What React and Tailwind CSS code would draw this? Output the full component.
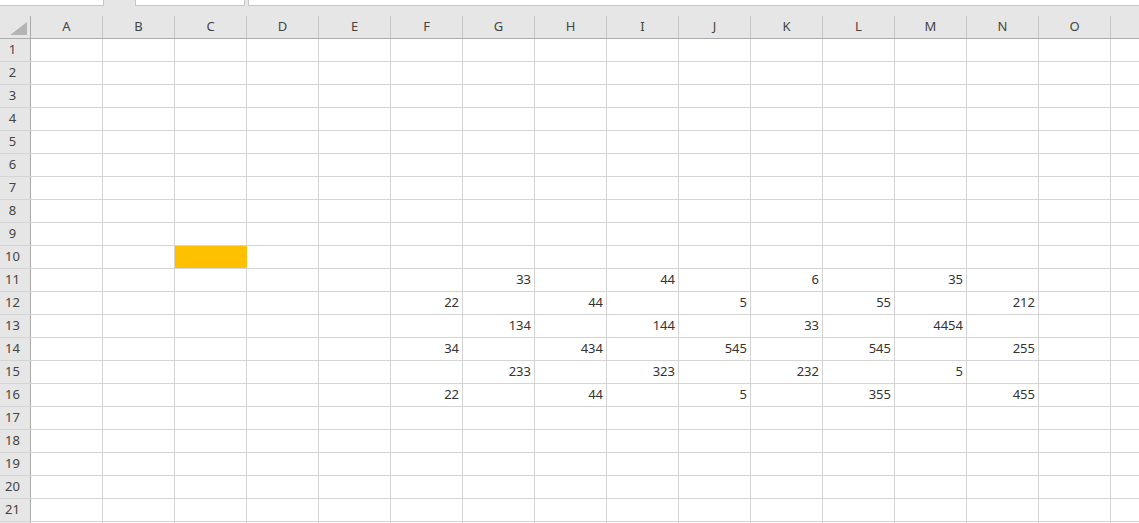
import React from 'react';

const COLS = ['A', 'B', 'C', 'D', 'E', 'F', 'G', 'H', 'I', 'J', 'K', 'L', 'M', 'N', 'O', ''];

// values per row, by column letter
const DATA = {
  11: { G: 33, I: 44, K: 6, M: 35 },
  12: { F: 22, H: 44, J: 5, L: 55, N: 212 },
  13: { G: 134, I: 144, K: 33, M: 4454 },
  14: { F: 34, H: 434, J: 545, L: 545, N: 255 },
  15: { G: 233, I: 323, K: 232, M: 5 },
  16: { F: 22, H: 44, J: 5, L: 355, N: 455 },
};

const rows = Array.from({ length: 22 }, (_, i) => i + 1);

export default function App() {
  return (
    <div
      className="w-[1139px] h-[523px] overflow-hidden bg-white text-[13px] text-[#333]"
      style={{ fontFamily: '"Noto Sans", "Open Sans", sans-serif' }}
    >
      {/* toolbar strip */}
      <div className="h-[16px] bg-[#e6e6e6] flex items-start">
        <div className="w-[104px] h-[6px] bg-white border-r border-b border-[#c6c6c6]" />
        <div className="ml-[31px] w-[110px] h-[6px] bg-white border-x border-b border-[#c6c6c6]" />
        <div className="ml-[3px] flex-1 h-[6px] bg-white border-l border-b border-[#c6c6c6]" />
      </div>

      {/* column headers */}
      <div className="flex h-[23px] bg-[#e6e6e6] border-b border-[#ababab]">
        <div className="w-[31px] shrink-0 border-r border-[#ababab] relative">
          <svg className="absolute left-[10px] top-[6px]" width="17" height="13" viewBox="0 0 17 13">
            <polygon points="17,0 17,13 0,13" fill="#b4b4b4" />
          </svg>
        </div>
        {COLS.map((c, i) => (
          <div
            key={i}
            className="w-[72px] shrink-0 border-r border-[#c6c6c6] flex items-center justify-center text-[#444]"
          >
            {c}
          </div>
        ))}
      </div>

      {/* rows */}
      {rows.map((r) => (
        <div key={r} className="flex h-[23px] border-b border-[#d4d4d4]">
          <div className="w-[31px] shrink-0 bg-[#e6e6e6] border-r border-[#ababab] flex items-center justify-center pr-[5px] text-[#444]">
            {r <= 21 ? r : ''}
          </div>
          {COLS.map((c, i) => {
            const v = DATA[r] && DATA[r][c];
            const yellow = r === 10 && c === 'C';
            return (
              <div
                key={i}
                className={
                  'w-[72px] shrink-0 flex items-center justify-end pr-[3px] ' +
                  (yellow ? 'bg-[#ffc000] border-r border-[#ffc000]' : 'border-r border-[#d4d4d4]')
                }
              >
                {v}
              </div>
            );
          })}
        </div>
      ))}
    </div>
  );
}
